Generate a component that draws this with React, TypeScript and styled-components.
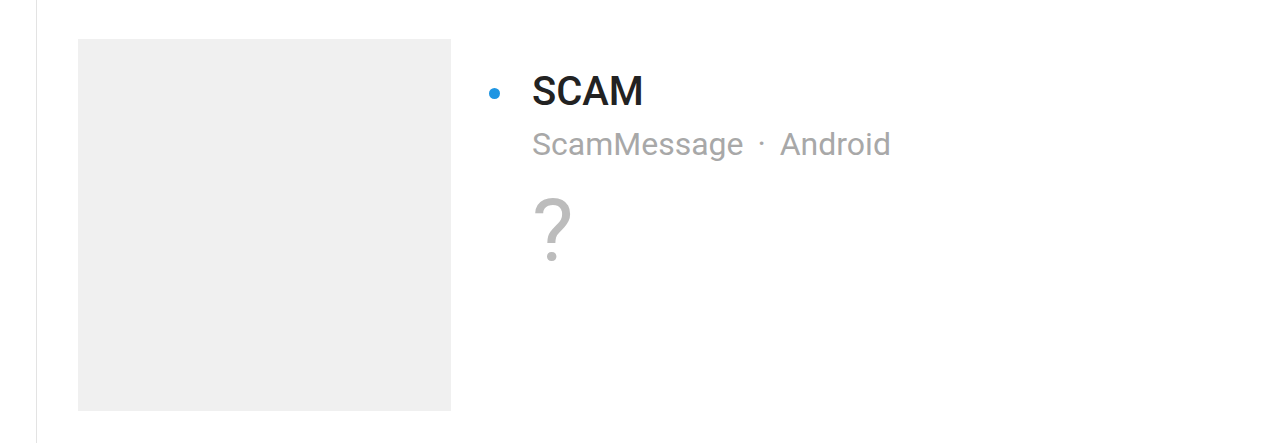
import React from "react";
import styled, { createGlobalStyle } from "styled-components";

const Global = createGlobalStyle`
  html, body { margin: 0; padding: 0; background: #ffffff; }
  body { font-family: Roboto, "Noto Sans", "Liberation Sans", sans-serif; }
`;

const Page = styled.div`
  height: 443px;
  padding-left: 36px;
  box-sizing: border-box;
  overflow: hidden;
`;

const Panel = styled.div`
  height: 100%;
  border-left: 1px solid #e3e3e3;
  box-sizing: border-box;
  padding: 39px 0 0 41px;
  display: flex;
  align-items: flex-start;
`;

const Thumb = styled.div`
  width: 373px;
  height: 372px;
  background: #f0f0f0;
  flex: none;
`;

const Info = styled.div`
  margin-left: 38px;
  padding-top: 30px;
  display: grid;
  grid-template-columns: 43px auto;
  align-items: center;
`;

const Dot = styled.span`
  width: 11px;
  height: 11px;
  border-radius: 50%;
  background: #1e95e2;
  justify-self: start;
  margin-top: 2px;
`;

const Title = styled.div`
  font-size: 40px;
  font-weight: 500;
  color: #222222;
  line-height: 46px;
`;

const Sub = styled.div`
  grid-column: 2;
  font-size: 32px;
  color: #a8a8a8;
  line-height: 36px;
  margin-top: 11px;
  white-space: nowrap;
`;

const Sep = styled.span`
  margin: 0 6px;
`;

const Unknown = styled.div`
  grid-column: 2;
  font-size: 88px;
  color: #bcbcbc;
  line-height: 100px;
  margin-top: 18px;
`;

export default function App() {
  return (
    <>
      <Global />
      <Page>
        <Panel>
          <Thumb />
          <Info>
            <Dot />
            <Title>SCAM</Title>
            <Sub>
              ScamMessage<Sep> · </Sep>Android
            </Sub>
            <Unknown>?</Unknown>
          </Info>
        </Panel>
      </Page>
    </>
  );
}
